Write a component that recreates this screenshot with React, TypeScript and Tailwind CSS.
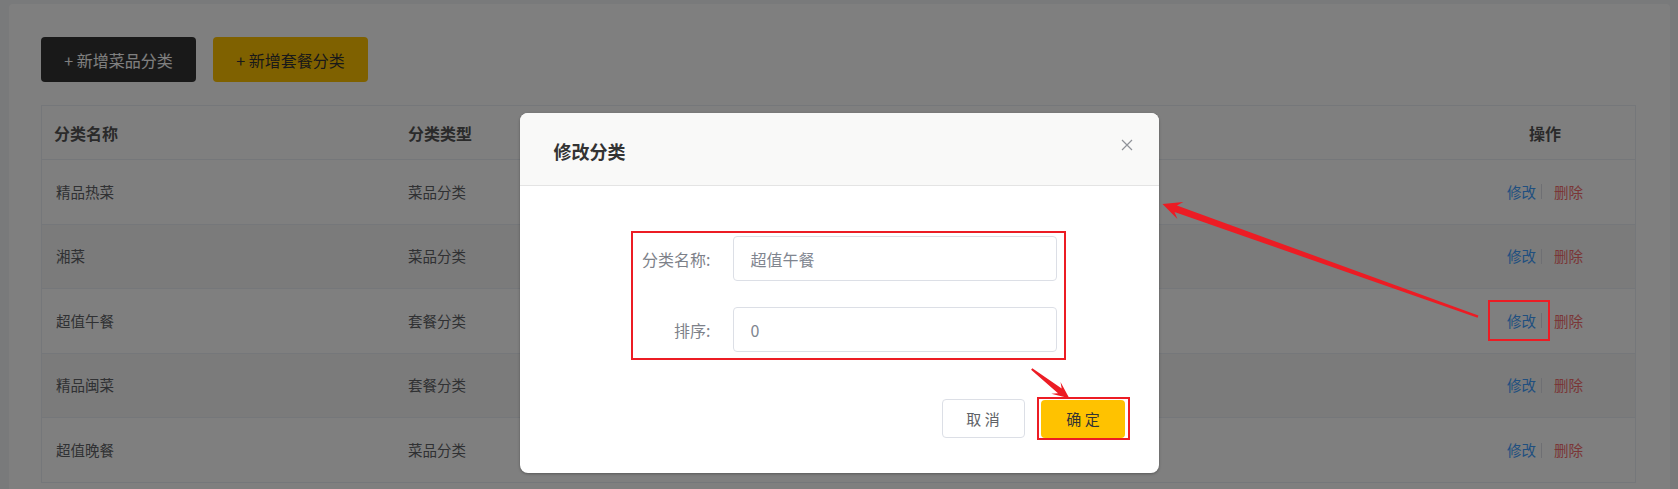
const rows = [
  { name: "精品热菜", type: "菜品分类" },
  { name: "湘菜", type: "菜品分类" },
  { name: "超值午餐", type: "套餐分类" },
  { name: "精品闽菜", type: "套餐分类" },
  { name: "超值晚餐", type: "菜品分类" },
];

// polygon points for a tapered annotation arrow, tail -> tip
function arrowPoints(
  x1: number, y1: number, x2: number, y2: number,
  head: number, hw: number, neck: number, w0: number, w1: number
) {
  const L = Math.hypot(x2 - x1, y2 - y1);
  const ux = (x2 - x1) / L, uy = (y2 - y1) / L;
  const nx = -uy, ny = ux;
  const bx = x2 - ux * head, by = y2 - uy * head;
  const kx = x2 - ux * neck, ky = y2 - uy * neck;
  const pts = [
    [x1 + nx * w0, y1 + ny * w0],
    [kx + nx * w1, ky + ny * w1],
    [bx + nx * hw, by + ny * hw],
    [x2, y2],
    [bx - nx * hw, by - ny * hw],
    [kx - nx * w1, ky - ny * w1],
    [x1 - nx * w0, y1 - ny * w0],
  ];
  return pts.map((p) => p.map((v) => v.toFixed(1)).join(",")).join(" ");
}

function FormRow({ label, value, className = "" }: { label: string; value: string; className?: string }) {
  return (
    <div className={`flex items-center ${className}`}>
      <div className="w-[100px] pr-[22px] text-right text-[16px] text-[#7d8189]">{label}</div>
      <div className="flex h-[45px] w-[324px] items-center rounded-[4px] border border-[#dcdfe6] pl-[17px] text-[16px] text-[#80858f]">
        {value}
      </div>
    </div>
  );
}

export default function App() {
  return (
    <div className="relative h-[489px] w-full overflow-hidden bg-[#f3f4f7] pl-[9px] pr-[8px] pt-[4px] font-['Noto_Sans_CJK_SC','Liberation_Sans',sans-serif] leading-none">
      <div className="h-[700px] rounded-[4px] bg-white pl-[32px] pr-[34px] pt-[33px]">
        <div className="flex gap-[17px]">
          <button className="h-[45px] w-[155px] rounded-[4px] bg-[#333333] text-[16px] text-white">+ 新增菜品分类</button>
          <button className="h-[45px] w-[155px] rounded-[4px] bg-[#ffc200] text-[16px] text-[#333333]">+ 新增套餐分类</button>
        </div>

        <div className="mt-[23px] border border-b-0 border-[#ebeef5]">
          <div className="grid h-[54px] grid-cols-[354px_1fr_180px] items-center border-b border-[#ebeef5] text-[16px] font-bold text-[#555]">
            <div className="pl-[12px]">分类名称</div>
            <div className="pl-[12px]">分类类型</div>
            <div className="text-center">操作</div>
          </div>
          {rows.map((r, i) => (
            <div
              key={r.name}
              className={`grid h-[64.6px] grid-cols-[354px_1fr_180px] items-center border-b border-[#ebeef5] text-[14.5px] text-[#606266] ${i % 2 === 1 ? "bg-[#f6f6f6]" : "bg-white"}`}
            >
              <div className="pl-[14px]">{r.name}</div>
              <div className="pl-[12px]">{r.type}</div>
              <div className="flex items-center justify-center">
                <span className="text-[#419eff]">修改</span>
                <span className="ml-[5px] mr-[12px] h-[15px] w-px bg-[#dcdfe6]" />
                <span className="text-[#f56c6c]">删除</span>
              </div>
            </div>
          ))}
        </div>
      </div>

      <div className="absolute inset-0 bg-black/50" />

      <div className="absolute inset-0 flex justify-center pt-[113px]">
        <div className="relative h-[360px] w-[639px] overflow-hidden rounded-[8px] bg-white shadow-[0_1px_3px_rgba(0,0,0,0.3)]">
          <div className="flex h-[73px] items-center border-b border-[#e4e4e4] bg-[#f9f9f8] pl-[34px] pt-[3px]">
            <span className="text-[18px] font-bold text-[#333333]">修改分类</span>
          </div>
          <svg className="absolute right-[26px] top-[26px]" width="12" height="12" viewBox="0 0 12 12">
            <path d="M1 1 L11 11 M11 1 L1 11" stroke="#909399" strokeWidth="1.2" fill="none" />
          </svg>

          <div className="pl-[111px] pt-[45px]">
            <div className="h-[129px] w-[435px] border-2 border-[#ec1c24] pt-[3px]">
              <FormRow label="分类名称:" value="超值午餐" />
              <FormRow label="排序:" value="0" className="mt-[26px]" />
            </div>
          </div>

          <div className="mt-[37px] flex items-center justify-end pr-[29px]">
            <button className="h-[39px] w-[83px] rounded-[4px] border border-[#dcdfe6] bg-white text-[15px] text-[#606266]">取 消</button>
            <div className="ml-[12px] flex h-[43px] w-[93px] items-center justify-center border-2 border-[#ec1c24]">
              <button className="h-[38px] w-[84px] rounded-[4px] bg-[#ffc200] text-[15px] text-[#333333]">确 定</button>
            </div>
          </div>
        </div>
      </div>

      {/* annotations */}
      <div className="absolute left-[1488px] top-[300px] h-[41px] w-[62px] border-2 border-[#ec1c24]" />
      <svg className="pointer-events-none absolute inset-0" width="1678" height="489">
        <polygon fill="#ec1c24" points={arrowPoints(1478, 316.7, 1162.5, 204, 19, 9, 14, 1.2, 3.5)} />
        <polygon fill="#ec1c24" points={arrowPoints(1031.7, 369, 1069.3, 398.3, 17, 7.5, 12, 1, 3)} />
      </svg>
    </div>
  );
}
